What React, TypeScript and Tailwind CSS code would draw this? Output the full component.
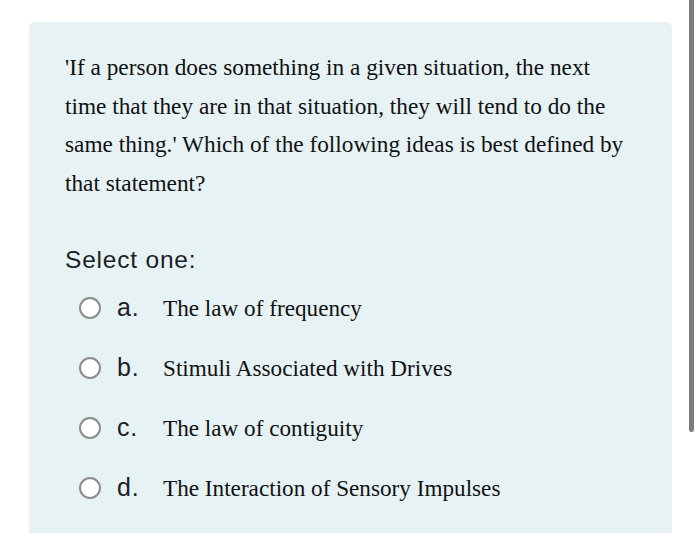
const options = [
  { letter: "a.", text: "The law of frequency" },
  { letter: "b.", text: "Stimuli Associated with Drives" },
  { letter: "c.", text: "The law of contiguity" },
  { letter: "d.", text: "The Interaction of Sensory Impulses" },
];

const App = () => {
  return (
    <div className="relative min-h-[533px] h-[533px] overflow-hidden bg-white">
      <div className="ml-[29px] mt-[22px] w-[643px] h-[540px] rounded-t-md bg-[#e6f2f4] pl-[36px] pt-[26px]">
        <p
          className="whitespace-nowrap text-[23.3px] leading-[38.5px] text-[#111]"
          style={{ fontFamily: '"Liberation Serif", "Times New Roman", serif' }}
        >
          'If a person does something in a given situation, the next
          <br />
          time that they are in that situation, they will tend to do the
          <br />
          same thing.' Which of the following ideas is best defined by
          <br />
          that statement?
        </p>

        <div
          className="mt-[40px] text-[24.5px] leading-[36px] tracking-[0.8px] text-[#1d2125]"
          style={{ fontFamily: '"Liberation Sans", Arial, sans-serif' }}
        >
          Select one:
        </div>

        <div className="flex flex-col">
          {options.map(({ letter, text }) => (
            <label key={letter} className="flex h-[60px] items-center">
              <span className="ml-[14px] h-[22px] w-[22px] shrink-0 rounded-full border-[2.5px] border-[#8c8c8c] bg-white" />
              <span
                className="ml-[16px] w-[46px] text-[25px] tracking-[0.8px] text-[#1d2125]"
                style={{ fontFamily: '"Liberation Sans", Arial, sans-serif' }}
              >
                {letter}
              </span>
              <span
                className="text-[23.2px] text-[#111]"
                style={{ fontFamily: '"Liberation Serif", "Times New Roman", serif' }}
              >
                {text}
              </span>
            </label>
          ))}
        </div>
      </div>

      <div className="absolute left-[689px] top-0 h-[432px] w-[5px] rounded-b-full bg-[#7d7d7d]" />
    </div>
  );
};

export default App;
